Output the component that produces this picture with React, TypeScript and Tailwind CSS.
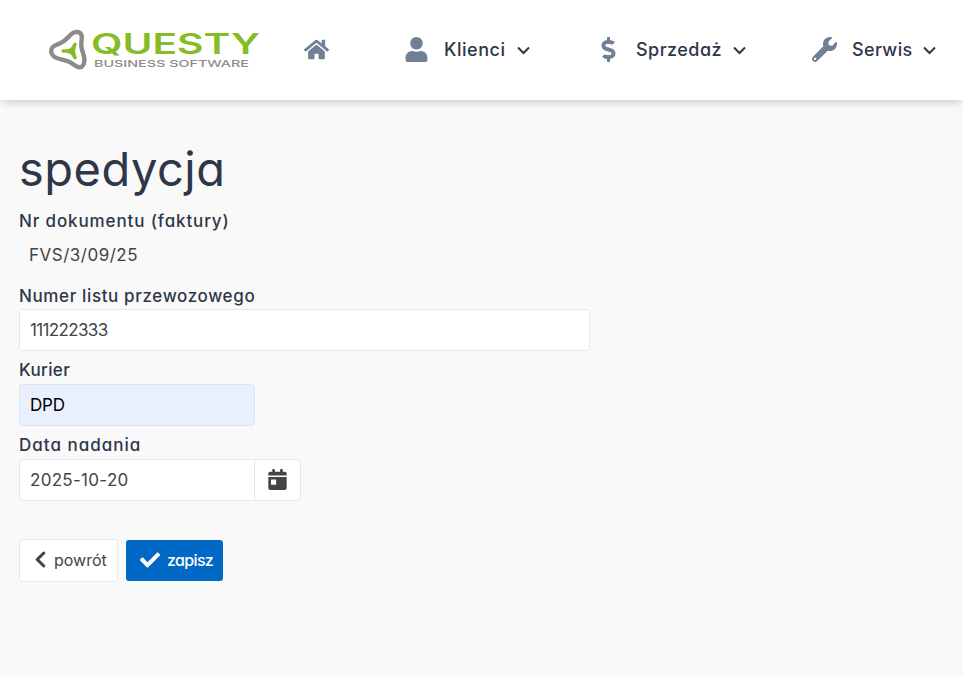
import { useState } from "react";
import type { ReactNode } from "react";
import { FaCalendarDay, FaCheck, FaChevronLeft, FaDollarSign, FaHome, FaUser, FaWrench } from "react-icons/fa";

function Logo() {
  return (
    <svg width="212" height="42" viewBox="0 0 212 42" className="shrink-0 overflow-visible" aria-label="Questy">
      <path
        d="M23.5 5C26.5 2.3 31.5 2.4 33.3 5.3C34.8 8.5 32.9 12.5 33.3 17C33.8 22.5 36.6 26 36.4 31C36.2 35.5 34.6 38.5 31.5 38.3C27.5 38 25.5 34.8 20.5 32.6C15.5 30.4 9.5 30.4 5.8 27.4C2.5 24.6 2.2 20.5 4.8 18C7.3 15.8 11.5 15.4 15.2 12.6C18.8 9.8 20.7 7.6 23.5 5Z"
        fill="none"
        stroke="#8b8b8b"
        strokeWidth="4.4"
      />
      <path
        d="M15.2 22H24L27 15.5M24 22L27 28.5"
        fill="none"
        stroke="#86bc25"
        strokeWidth="3.6"
        strokeLinecap="round"
        strokeLinejoin="round"
      />
      <path d="M19 20.3Q23.6 19.4 25.3 15.2L28 16.5Q26.2 22 28 27.5L25.3 28.8Q23.6 24.6 19 23.7Z" fill="#86bc25" />
      <text x="43" y="24.5" textLength="169" lengthAdjust="spacingAndGlyphs" fill="#86bc25" className="font-['Inter',sans-serif] text-[28px] leading-none font-semibold">
        QUESTY
      </text>
      <text x="46" y="37.8" textLength="155" lengthAdjust="spacingAndGlyphs" fill="#8b8b8b" className="font-['Inter',sans-serif] text-[9.5px] leading-none font-medium">
        BUSINESS SOFTWARE
      </text>
    </svg>
  );
}

function ChevronDown() {
  return (
    <svg width="13" height="9" viewBox="0 0 13 9" fill="none" stroke="#2d3748" strokeWidth="2" className="shrink-0">
      <path d="M1 1.5L6.5 7L12 1.5" />
    </svg>
  );
}

interface NavItemProps {
  icon: ReactNode;
  label: string;
  className: string;
  labelClassName: string;
}

function NavItem({ icon, label, className, labelClassName }: NavItemProps) {
  return (
    <button type="button" className={`flex shrink-0 items-center text-lg font-medium ${className}`}>
      <span className="flex w-[25px] justify-center pb-0.5 text-[25px] text-[#718096]">{icon}</span>
      <span className={`ml-[15px] whitespace-nowrap text-left ${labelClassName}`}>{label}</span>
      <ChevronDown />
    </button>
  );
}

function Label({ children, className }: { children: ReactNode; className: string }) {
  return <label className={`mt-2 block h-[25px] text-[17px] font-medium ${className}`}>{children}</label>;
}

export default function App() {
  const [number, setNumber] = useState("111222333");
  const [courier, setCourier] = useState("DPD");
  const [date, setDate] = useState("2025-10-20");

  return (
    <div className="min-h-screen overflow-hidden bg-[#f9f9f9] font-['Inter','Open_Sans',sans-serif] text-[#2d3748] [font-feature-settings:'cv11']">
      <header className="flex h-[100px] items-center bg-white pl-12 shadow-[0_4px_8px_-2px_rgba(0,0,0,0.2)]">
        <Logo />
        <FaHome className="mb-0.5 ml-11 shrink-0 text-[25px] text-[#718096]" />
        <NavItem icon={<FaUser />} label="Klienci" className="ml-[75px]" labelClassName="w-[73px] tracking-[0.55px]" />
        <NavItem icon={<FaDollarSign />} label="Sprzedaż" className="ml-[66px]" labelClassName="w-[97px] tracking-[0.45px]" />
        <NavItem icon={<FaWrench />} label="Serwis" className="ml-[66px]" labelClassName="w-[71px] tracking-[0.35px]" />
      </header>

      <main className="px-[19px] pt-[34px]">
        <h1 className="h-[67px] text-[47px] leading-[70px] font-normal tracking-[0.5px]">spedycja</h1>

        <Label className="leading-[25px] tracking-[0.87px]">Nr dokumentu (faktury)</Label>
        <div className="h-[42px] px-2.5 text-[17px] leading-[42px] tracking-[0.5px] text-[#444]">FVS/3/09/25</div>

        <Label className="leading-[25px] tracking-[0.63px]">Numer listu przewozowego</Label>
        <input
          value={number}
          onChange={(e) => setNumber(e.target.value)}
          className="block h-[42px] w-[571px] rounded-[3px] border border-[#e2e8f0] bg-white px-2.5 text-[17px] tracking-[-0.65px] text-[#444] outline-none"
        />

        <Label className="leading-[23px] tracking-[0.35px]">Kurier</Label>
        <input
          value={courier}
          onChange={(e) => setCourier(e.target.value)}
          className="block h-[42px] w-[236px] rounded-[3px] border border-[#dce5f2] bg-[#e8f0fe] px-2.5 text-[17px] tracking-[-0.2px] text-black outline-none"
        />

        <Label className="leading-[23px] tracking-[1px]">Data nadania</Label>
        <div className="flex h-[42px] w-[282px] rounded-[3px] border border-[#e2e8f0] bg-white">
          <input
            value={date}
            onChange={(e) => setDate(e.target.value)}
            className="w-[235px] border-r border-[#e2e8f0] px-2.5 pt-0.5 text-[17px] tracking-[0.3px] text-[#444] outline-none"
          />
          <button type="button" className="flex flex-1 items-center justify-center pb-0.5 text-[21px] text-[#444]">
            <FaCalendarDay />
          </button>
        </div>

        <div className="mt-[38px] flex items-center gap-2">
          <button type="button" className="flex h-[43px] w-[99px] items-center rounded-[3px] border border-[#e2e8f0] bg-white pb-0.5 pl-[11px] text-[#444]">
            <FaChevronLeft className="text-[19px]" />
            <span className="ml-1">powrót</span>
          </button>
          <button type="button" className="flex h-[41px] w-[97px] items-center rounded-[3px] bg-[#0069c5] pb-0.5 pl-[14px] font-medium text-white">
            <FaCheck className="text-[20px]" />
            <span className="ml-[7px] tracking-[-0.65px]">zapisz</span>
          </button>
        </div>
      </main>
    </div>
  );
}
